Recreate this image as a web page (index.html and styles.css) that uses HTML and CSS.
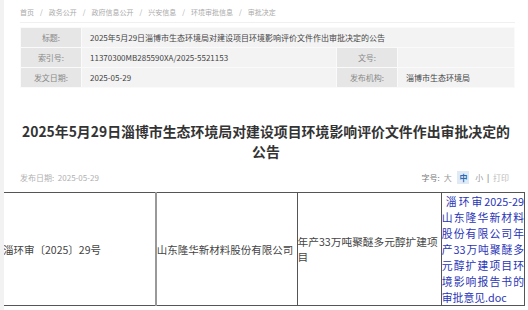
FILE: index.html
```html
<!doctype html>
<html>
    <head>
        <title>审批决定</title>
        <link rel="stylesheet" href="styles.css">
    </head>
    <body>
        <div class="page">
            <div class="crumbs">
                <a>首页</a><span>/</span><a>政务公开</a><span>/</span><a>政府信息公开</a><span>/</span><a>兴安信息</a><span>/</span><a>环境审批信息</a><span>/</span><a>审批决定</a>
            </div>

            <table class="info">
                <tr>
                    <th>标题:</th>
                    <td colspan="3">2025年5月29日淄博市生态环境局对建设项目环境影响评价文件作出审批决定的公告</td>
                </tr>
                <tr>
                    <th>索引号:</th>
                    <td>11370300MB285590XA/2025-5521153</td>
                    <th>文号:</th>
                    <td></td>
                </tr>
                <tr>
                    <th>发文日期:</th>
                    <td>2025-05-29</td>
                    <th>发布机构:</th>
                    <td>淄博市生态环境局</td>
                </tr>
            </table>

            <h1 class="title">2025年5月29日淄博市生态环境局对建设项目环境影响评价文件作出审批决定的公告</h1>

            <div class="meta">
                <span>发布日期:&nbsp; 2025-05-29</span>
                <div class="tools">
                    字号: <a>大</a> <a class="on">中</a> <a>小</a> <span class="bar">|</span> <a class="print">打印</a>
                </div>
            </div>

            <table class="doc">
                <tr>
                    <td class="c1">淄环审〔2025〕29号</td>
                    <td class="c2">山东隆华新材料股份有限公司</td>
                    <td class="c3">年产33万吨聚醚多元醇扩建项目</td>
                    <td class="c4"><a>淄环审2025-29山东隆华新材料股份有限公司年产33万吨聚醚多元醇扩建项目环境影响报告书的审批意见.doc</a></td>
                </tr>
            </table>
        </div>
    </body>
</html>
```

FILE: styles.css
```css
* {
    box-sizing: border-box;
}
body {
    margin: 0;
    background: #f2f2f2;
    font-family: "Noto Sans CJK SC", "Noto Sans", sans-serif;
    color: #333;
}

.page {
    margin-left: 4px;
    height: 310px;
    background: #fff;
    overflow: hidden;
}

.crumbs {
    margin: 0 13px 0 16px;
    padding: 6px 0 4px;
    font-size: 7px;
    line-height: 12px;
    color: #aaa;
    border-bottom: 1px solid #f0f0f0;

    span {
        margin: 0 6px;
    }
}

.info {
    margin: 4px 0 0 16px;
    width: 495px;
    border-collapse: collapse;
    font-size: 8px;

    th,
    td {
        height: 20px;
        padding: 0;
        border: 1px solid #fafafa;
    }
    th {
        width: 61px;
        background: #e6e6e6;
        color: #888;
        font-weight: normal;
        text-align: center;
    }
    td {
        background: #f3f3f3;
        padding-left: 8px;
        color: #444;
    }
    tr:nth-child(2) td:first-of-type {
        width: 255px;
    }
}

.title {
    margin: 33px 17px 0 17px;
    font-size: 13.9px;
    line-height: 20px;
    text-align: center;
    color: #333;
}

.meta {
    display: flex;
    justify-content: space-between;
    align-items: center;
    margin: 11px 17px 0 16px;
    font-size: 8px;
    line-height: 12px;
    color: #b0b0b0;

    .tools {
        color: #777;
        a {
            margin: 0 2px;
            color: #999;
        }
        .on {
            padding: 1px 2px;
            background: #dfeaf6;
            color: #2b6bb5;
            font-weight: bold;
        }
        .bar {
            color: #555;
        }
        .print {
            color: #bbb;
        }
    }
}

.doc {
    margin: 8px 0 0 -2px;
    width: 523px;
    border-collapse: collapse;
    font-size: 10.5px;
    color: #444;

    td {
        padding: 0;
        border: 1px solid #555;
        vertical-align: middle;
    }
    .c1 {
        width: 153px;
    }
    .c2 {
        width: 141px;
        border-left: 2px solid #999;
    }
    .c3 {
        width: 144px;
        font-size: 10.7px;
        line-height: 15px;
    }
    .c4 {
        width: 83px;
        font-size: 10.8px;
        line-height: 16px;
        text-align: justify;
        text-indent: 4px;
        a {
            color: #2a35b8;
        }
    }
}
```
